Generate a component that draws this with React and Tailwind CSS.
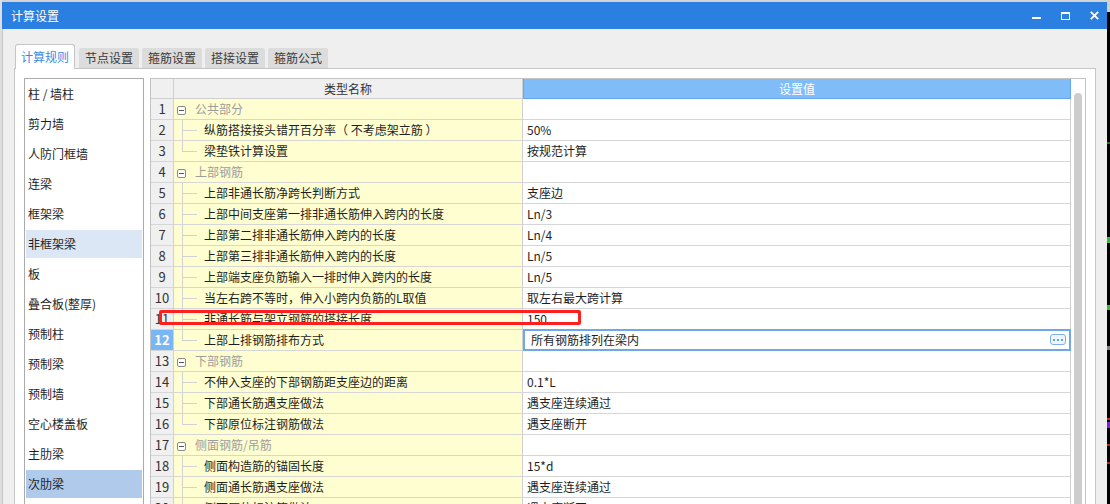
import React from "react";

const rows = [
  { g: true, t: "公共部分" },
  { t: "纵筋搭接接头错开百分率（ 不考虑架立筋 ）", v: "50%" },
  { t: "梁垫铁计算设置", v: "按规范计算", last: true },
  { g: true, t: "上部钢筋" },
  { t: "上部非通长筋净跨长判断方式", v: "支座边" },
  { t: "上部中间支座第一排非通长筋伸入跨内的长度", v: "Ln/3" },
  { t: "上部第二排非通长筋伸入跨内的长度", v: "Ln/4" },
  { t: "上部第三排非通长筋伸入跨内的长度", v: "Ln/5" },
  { t: "上部端支座负筋输入一排时伸入跨内的长度", v: "Ln/5" },
  { t: "当左右跨不等时，伸入小跨内负筋的L取值", v: "取左右最大跨计算" },
  { t: "非通长筋与架立钢筋的搭接长度", v: "150" },
  { t: "上部上排钢筋排布方式", v: "所有钢筋排列在梁内", last: true },
  { g: true, t: "下部钢筋" },
  { t: "不伸入支座的下部钢筋距支座边的距离", v: "0.1*L" },
  { t: "下部通长筋遇支座做法", v: "遇支座连续通过" },
  { t: "下部原位标注钢筋做法", v: "遇支座断开", last: true },
  { g: true, t: "侧面钢筋/吊筋" },
  { t: "侧面构造筋的锚固长度", v: "15*d" },
  { t: "侧面通长筋遇支座做法", v: "遇支座连续通过" },
  { t: "侧面原位标注筋做法", v: "遇支座断开" },
];

const items = [
  "柱 / 墙柱",
  "剪力墙",
  "人防门框墙",
  "连梁",
  "框架梁",
  "非框架梁",
  "板",
  "叠合板(整厚)",
  "预制柱",
  "预制梁",
  "预制墙",
  "空心楼盖板",
  "主肋梁",
  "次肋梁",
];

function Row({ r, n }) {
  const sel = n === 12;
  return (
    <div className="flex h-[21px] shrink-0 border-b border-[#d6d6d6]">
      <div
        className={
          sel
            ? "w-[23px] shrink-0 border-r border-[#d0d0d0] bg-[#78b6f5] text-white font-bold flex items-center justify-center text-[13px]"
            : "w-[23px] shrink-0 border-r border-[#d0d0d0] bg-[#f0f0f0] text-[#333] flex items-center justify-center text-[13px]"
        }
      >
        {n}
      </div>
      <div className="w-[349px] shrink-0 border-r border-[#d0d0d0] bg-[#fffed0] relative flex items-center">
        {r.g ? (
          <>
            <span className="absolute left-[3px] top-[7px] w-[9px] h-[9px] border border-[#8a8a8a] rounded-[2px] bg-white flex items-center justify-center">
              <span className="w-[5px] h-px bg-[#555]" />
            </span>
            <span className="pl-[21px] text-[#9d9d9d] whitespace-nowrap">{r.t}</span>
          </>
        ) : (
          <>
            <span
              className={
                r.last
                  ? "absolute left-[8px] top-0 w-px h-[10px] bg-[#d2d2d2]"
                  : "absolute left-[8px] top-0 w-px h-[21px] bg-[#d2d2d2]"
              }
            />
            <span className="absolute left-[8px] top-[10px] w-[15px] h-px bg-[#d2d2d2]" />
            <span className="pl-[30px] text-[#1e1e1e] whitespace-pre">{r.t}</span>
          </>
        )}
      </div>
      <div className="w-[548px] shrink-0 border-r border-[#d0d0d0] bg-white relative flex items-center">
        {sel ? (
          <>
            <span className="absolute left-0 right-[-1px] -top-px -bottom-px border-2 border-[#6ea8e8]" />
            <span className="pl-[8px] text-[#1e1e1e] whitespace-nowrap">{r.v}</span>
            <span className="absolute right-[4px] top-[4px] w-[16px] h-[11px] rounded-[3px] border border-[#7eb0e6] bg-[#eef5fd] flex items-center justify-center gap-[2px]">
              <span className="w-[2px] h-[2px] bg-[#6a9fd8]" />
              <span className="w-[2px] h-[2px] bg-[#6a9fd8]" />
              <span className="w-[2px] h-[2px] bg-[#6a9fd8]" />
            </span>
          </>
        ) : (
          <span className="pl-[4px] text-[#1e1e1e] whitespace-nowrap">{r.v}</span>
        )}
      </div>
    </div>
  );
}

export default function App() {
  return (
    <div className="relative w-[1110px] h-[504px] overflow-hidden flex bg-[#f0f0f0] text-[12px] font-['Noto_Sans_CJK_SC','Microsoft_YaHei',sans-serif]">
      <div className="w-[2px] shrink-0 bg-[#dedede]" />
      <div className="w-[1105px] shrink-0 flex flex-col">
        <div className="h-[2px] shrink-0 bg-[#d2d2d2]" />
        <div className="h-[27px] shrink-0 bg-[#2a7fe0] flex items-center pl-[9px] pr-[8px] text-white">
          <span className="leading-none">计算设置</span>
          <div className="ml-auto flex items-center gap-[20px]">
            <svg width="9" height="9" viewBox="0 0 9 9">
              <rect x="0" y="6" width="9" height="2" fill="#fff" />
            </svg>
            <svg width="9" height="9" viewBox="0 0 9 9">
              <rect x="0.5" y="1.5" width="8" height="7" fill="none" stroke="#fff" strokeWidth="1" />
              <rect x="0" y="1" width="9" height="2" fill="#fff" />
            </svg>
            <svg width="9" height="9" viewBox="0 0 9 9">
              <path d="M0.8 0.8 L8.2 8.2 M8.2 0.8 L0.8 8.2" stroke="#fff" strokeWidth="1.8" />
            </svg>
          </div>
        </div>
        <div className="flex-1 bg-[#efefef] border-l border-[#c6c6c6] pl-[11px] pt-[15px] flex flex-col">
          <div className="relative z-10 flex items-end h-[24px] pl-px">
            <div className="w-[60px] h-[25px] -mb-px bg-white border border-b-0 border-[#c5c5c5] rounded-t-[3px] flex items-center justify-center text-[#3a8ae6] pb-[1px]">
              计算规则
            </div>
            <div className="ml-[4px] flex gap-[3px]">
              {["节点设置", "箍筋设置", "搭接设置", "箍筋公式"].map((t) => (
                <div
                  key={t}
                  className="w-[60px] h-[20px] bg-[#dcdcdc] rounded-t-[2px] flex items-center justify-center text-[#3a3a3a]"
                >
                  {t}
                </div>
              ))}
            </div>
          </div>
          <div className="w-[1082px] flex-1 bg-white border border-[#c5c5c5] flex pl-[9px] pt-[9px] gap-[6px]">
            <div className="w-[120px] shrink-0 border border-[#ababab] pt-px px-px flex flex-col">
              {items.map((t, i) => (
                <div
                  key={t}
                  className={
                    i === 5
                      ? "h-[28px] mb-[2px] shrink-0 pl-[2px] flex items-center text-[#1e1e1e] bg-[#dce7f6]"
                      : i === 13
                      ? "h-[28px] mb-[2px] shrink-0 pl-[2px] flex items-center text-[#1e1e1e] bg-[#afcaeb]"
                      : "h-[28px] mb-[2px] shrink-0 pl-[2px] flex items-center text-[#1e1e1e]"
                  }
                >
                  {t}
                </div>
              ))}
            </div>
            <div className="w-[936px] shrink-0 border border-[#c3c3c3] flex">
              <div className="w-[920px] shrink-0 flex flex-col">
                <div className="flex h-[20px] shrink-0">
                  <div className="w-[23px] shrink-0 bg-[#f0f0f0] border-r border-b border-[#cfcfcf]" />
                  <div className="w-[349px] shrink-0 bg-[#f0f0f0] border-r border-b border-[#cfcfcf] flex items-center justify-center text-[#333]">
                    类型名称
                  </div>
                  <div className="w-[548px] shrink-0 bg-[#80bcf8] border border-t-0 border-[#62a6ee] flex items-center justify-center text-white">
                    设置值
                  </div>
                </div>
                {rows.map((r, i) => (
                  <Row key={i} r={r} n={i + 1} />
                ))}
              </div>
              <div className="w-[14px] shrink-0 bg-white flex flex-col pt-[14px] pl-[3px]">
                <div className="w-[8px] flex-1 bg-[#cdcdcd] rounded-t-full" />
              </div>
            </div>
          </div>
        </div>
      </div>
      <div className="w-[3px] shrink-0 flex flex-col bg-black">
        <div className="h-[12px] bg-[#d0d0d0]" />
        <div className="h-[2px] mt-[130px] bg-[#1c7a1c]" />
        <div className="h-[6px] mt-[93px] bg-[#30c030]" />
        <div className="h-[5px] mt-[62px] bg-[#30c030]" />
        <div className="h-[4px] mt-[36px] bg-[#808080]" />
        <div className="h-[2px] mt-[68px] bg-[#e02020]" />
        <div className="h-[6px] mt-[2px] bg-[#8020e0]" />
        <div className="h-[2px] mt-[16px] bg-[#c02020]" />
        <div className="h-[2px] mt-[16px] bg-[#c02020]" />
      </div>
      <div className="absolute left-[159px] top-[310px] w-[422px] h-[15px] border-[3px] border-[#ff1f1f] rounded-[2px]" />
    </div>
  );
}
